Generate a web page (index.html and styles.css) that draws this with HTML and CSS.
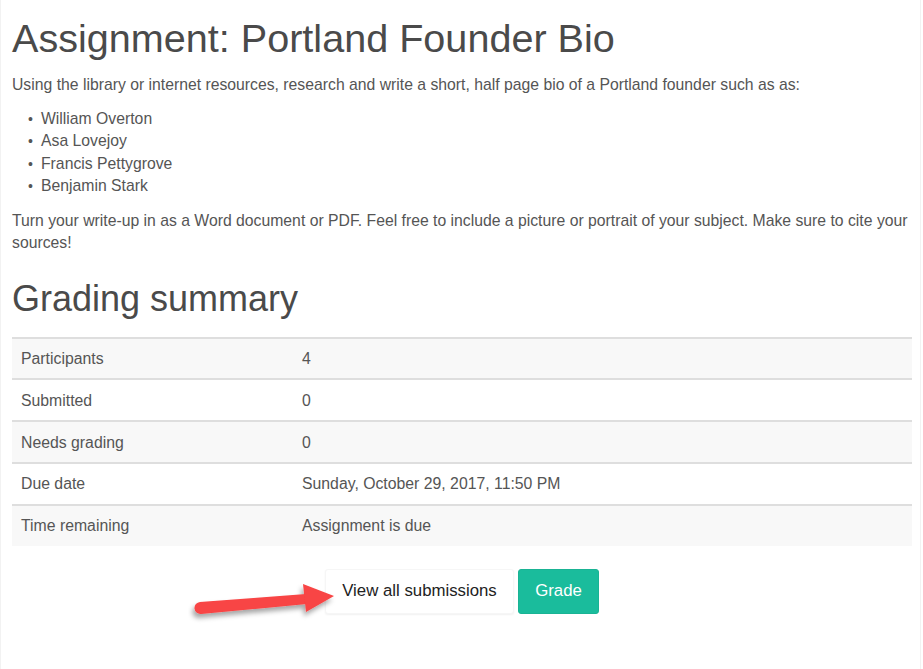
FILE: index.html
```html
<!DOCTYPE html>
<html>
<head>
<meta charset="utf-8">
<link rel="stylesheet" href="styles.css">
</head>
<body>
<div class="frame">
  <div class="content">
    <h2 class="title">Assignment: Portland Founder Bio</h2>
    <p class="intro">Using the library or internet resources, research and write a short, half page bio of a Portland founder such as as:</p>
    <ul class="list">
      <li>William Overton</li>
      <li>Asa Lovejoy</li>
      <li>Francis Pettygrove</li>
      <li>Benjamin Stark</li>
    </ul>
    <p class="intro">Turn your write-up in as a Word document or PDF. Feel free to include a picture or portrait of your subject. Make sure to cite your sources!</p>
    <h3 class="title sub">Grading summary</h3>
    <table class="summary">
      <tr><td class="c1">Participants</td><td>4</td></tr>
      <tr><td class="c1">Submitted</td><td>0</td></tr>
      <tr><td class="c1">Needs grading</td><td>0</td></tr>
      <tr><td class="c1">Due date</td><td>Sunday, October 29, 2017, 11:50 PM</td></tr>
      <tr><td class="c1">Time remaining</td><td>Assignment is due</td></tr>
    </table>
    <div class="actions">
      <a class="btn btn-light">View all submissions</a>
      <a class="btn btn-grade">Grade</a>
      <svg class="arrow" width="160" height="50" viewBox="0 0 160 50">
        <defs>
          <filter id="sh" x="-20%" y="-40%" width="140%" height="180%">
            <feDropShadow dx="-2" dy="4" stdDeviation="2.5" flood-color="#000" flood-opacity="0.35"/>
          </filter>
        </defs>
        <g filter="url(#sh)" fill="#f84444">
          <path d="M12 23 L118 15 L119 25 L13 35 A6 6 0 0 1 12 23 Z"/>
          <path d="M115 5 L146 17 L118 33 Z"/>
        </g>
      </svg>
    </div>
  </div>
</div>
</body>
</html>
```

FILE: styles.css
```css
html, body {
  margin: 0;
  padding: 0;
  background: #fff;
}
.frame {
  width: 921px;
  height: 669px;
  border-left: 1px solid #f2f2f2;
  border-right: 1px solid #f2f2f2;
  box-sizing: border-box;
  font-family: "Liberation Sans", Arial, sans-serif;
  color: #555;
}
.content {
  padding: 8px 0 0 11px;
  width: 900px;
}
.title {
  font-weight: normal;
  font-size: 39.6px;
  line-height: 46px;
  color: #4a4a4a;
  margin: 7px 0 13px 0;
}
.sub {
  font-size: 36px;
  line-height: 44px;
  margin: 23px 0 16px 0;
}
.intro {
  font-size: 15.75px;
  line-height: 22px;
  margin: 0 0 12px 0;
}
.list {
  margin: 0 0 12px 0;
  padding-left: 29px;
  font-size: 15.75px;
  line-height: 22.4px;
  list-style: none;
}
.list li {
  position: relative;
}
.list li::before {
  content: "\2022";
  position: absolute;
  left: -13px;
  top: 0;
  font-size: 14px;
}
.summary {
  width: 900px;
  border-collapse: collapse;
  table-layout: fixed;
  font-size: 15.8px;
}
.summary td {
  border-top: 2px solid #dedede;
  padding: 1px 9px 0 9px;
  height: 38.8px;
  vertical-align: middle;
}
.summary tr:nth-child(odd) td {
  background: #f8f8f8;
}
.summary .c1 {
  width: 263px;
}
.actions {
  position: relative;
  display: flex;
  justify-content: center;
  gap: 4px;
  margin-top: 23px;
}
.btn {
  display: inline-flex;
  align-items: center;
  justify-content: center;
  height: 45px;
  box-sizing: border-box;
  font-size: 16.8px;
  border-radius: 3px;
}
.btn-light {
  width: 189px;
  background: #fff;
  color: #222;
  box-shadow: 0 1px 2px rgba(0,0,0,0.06);
  border: 1px solid #f6f6f6;
}
.btn-grade {
  width: 81px;
  background: #1abc9c;
  color: #fff;
  border: 1px solid #1ab394;
}
.arrow {
  position: absolute;
  left: 176px;
  top: 10px;
}
```
